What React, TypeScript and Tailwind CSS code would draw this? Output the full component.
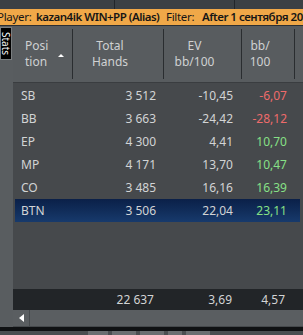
const rows = [
  { pos: 'SB', hands: '3 512', ev: '-10,45', bb: '-6,07', up: false },
  { pos: 'BB', hands: '3 663', ev: '-24,42', bb: '-28,12', up: false },
  { pos: 'EP', hands: '4 300', ev: '4,41', bb: '10,70', up: true },
  { pos: 'MP', hands: '4 171', ev: '13,70', bb: '10,47', up: true },
  { pos: 'CO', hands: '3 485', ev: '16,16', bb: '16,39', up: true },
  { pos: 'BTN', hands: '3 506', ev: '22,04', bb: '23,11', up: true, sel: true },
];

export default function App() {
  return (
    <div
      className="w-[303px] h-[335px] overflow-hidden flex flex-col bg-[#46494c] text-[12px]"
      style={{ fontFamily: '"Noto Sans", "Open Sans", sans-serif' }}
    >
      {/* window strip */}
      <div className="h-[9px] flex bg-[#3b4044]">
        <div className="w-[115px] border-r border-[#22262a]" />
        <div className="w-[120px] border-r border-[#22262a]" />
      </div>

      {/* filter bar */}
      <div className="h-[16px] bg-[#f0a848] text-[#161616] text-[11.5px] leading-[16px] whitespace-nowrap overflow-hidden">
        <div className="flex -ml-[3px]">
          <span className="w-[39px] shrink-0 tracking-[-0.3px]">Player:</span>
          <span className="w-[130px] shrink-0 font-semibold tracking-[-0.5px]">kazan4ik WIN+PP (Alias)</span>
          <span className="w-[36px] shrink-0 tracking-[-0.3px]">Filter:</span>
          <span className="shrink-0 font-semibold tracking-[-0.5px]">After 1 сентября 2014</span>
        </div>
      </div>

      <div className="flex flex-1 min-h-0 border-t border-[#2c2f32]">
        {/* side strip */}
        <div className="w-[13px] bg-[#595d60] pt-[1px]">
          <div className="h-[33px] w-[12px] bg-black border border-[#7a7e80] flex items-center justify-center">
            <span
              className="text-white text-[10px] leading-none"
              style={{ writingMode: 'vertical-rl' }}
            >
              Stats
            </span>
          </div>
        </div>

        <div className="flex-1 flex flex-col">
          {/* header */}
          <div className="h-[57px] bg-[#585c5f] flex items-center text-[#cfd1d2] leading-[16px] border-b border-[#3a3d40]">
            <div className="w-[60px] h-[50px] flex items-center border-r border-[#2a2d30] pl-[12px] relative">
              <div>
                Posi
                <br />
                tion
              </div>
              <div className="absolute left-[45px] top-[25px] w-0 h-0 border-l-[3px] border-r-[3px] border-b-[3px] border-l-transparent border-r-transparent border-b-white" />
            </div>
            <div className="w-[91px] h-[50px] flex items-center justify-center text-center pr-[16px] border-r border-[#2a2d30]">
              Total
              <br />
              Hands
            </div>
            <div className="w-[78px] h-[50px] flex items-center justify-center text-center pr-[16px] border-r border-[#2a2d30]">
              EV
              <br />
              bb/100
            </div>
            <div className="w-[53px] h-[50px] flex items-center justify-center text-center pr-[16px] border-r border-[#2a2d30]">
              bb/
              <br />
              100
            </div>
          </div>

          {/* body */}
          <div className="flex-1 pt-[1px] text-[#d2d4d5]">
            {rows.map((r) => (
              <div
                key={r.pos}
                className={`h-[23px] flex items-center ml-[2px] mr-[3px] ${
                  r.sel ? 'bg-gradient-to-b from-[#0b2048] to-[#173a6c]' : ''
                }`}
              >
                <div className="w-[58px] pl-[6px]">{r.pos}</div>
                <div className="w-[91px] text-right pr-[8px]">{r.hands}</div>
                <div className="w-[78px] text-right pr-[9px]">{r.ev}</div>
                <div
                  className={`w-[53px] text-right pr-[8px] ${
                    r.up ? 'text-[#86e086]' : 'text-[#ee6b6b]'
                  }`}
                >
                  {r.bb}
                </div>
              </div>
            ))}
          </div>

          {/* totals */}
          <div className="h-[21px] bg-[#222528] flex items-center text-[#d2d4d5]">
            <div className="w-[60px]" />
            <div className="w-[91px] text-right pr-[10px]">22 637</div>
            <div className="w-[78px] text-right pr-[10px]">3,69</div>
            <div className="w-[53px] text-right pr-[10px]">4,57</div>
          </div>

          {/* scrollbar */}
          <div className="h-[17px] bg-[#5a5e61] flex border-b border-[#45494c]">
            <div className="w-[17px] border-r border-[#45494c] flex items-center justify-center">
              <div className="w-0 h-0 border-t-[4px] border-b-[4px] border-r-[5px] border-t-transparent border-b-transparent border-r-white" />
            </div>
          </div>
        </div>
      </div>

      {/* bottom */}
      <div className="h-[4px] bg-[#101214]" />
      <div className="h-[4px] bg-[#4a4e51] flex gap-[4px] pl-[88px]">
        <div className="w-[20px] bg-[#6a6e71]" />
        <div className="w-[24px] bg-[#6a6e71]" />
        <div className="w-[24px] bg-[#6a6e71]" />
        <div className="w-[14px] bg-[#6a6e71]" />
        <div className="w-[24px] bg-[#6a6e71]" />
      </div>
    </div>
  );
}
